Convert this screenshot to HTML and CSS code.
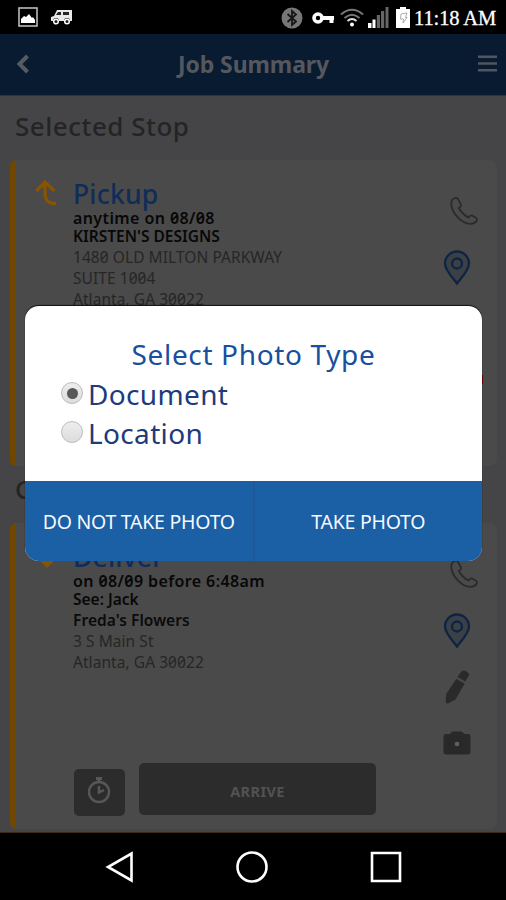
FILE: index.html
```html
<!DOCTYPE html>
<html lang="en">
<head>
<meta charset="utf-8">
<title>Job Summary</title>
<link rel="stylesheet" href="styles.css">
</head>
<body>
<svg class="defs" width="0" height="0">
  <symbol id="phone" viewBox="0 0 28 28"><path d="M5 1C2 2 .8 5 1.500 9C3 17 12 26.500 20 26.800C24 27 26 25 27 23C27.300 21.800 26.500 21 25.500 20.500L22 18.500C20.500 18 19.500 19 18.500 20.500C15 19 10.500 14.500 8.800 11C10.500 10 11.500 9 11 7.500L8 2C7.200.8 6.200.6 5 1Z"/></symbol>
  <symbol id="pin" viewBox="0 0 28 36"><path d="M14 33.500C10.500 28.500 2 20.500 2 13.500A12 12 0 0 1 26 13.500C26 20.500 17.500 28.500 14 33.500Z"/><circle cx="14" cy="13.500" r="5"/></symbol>
</svg>
<div class="screen">
  <div class="status">
    <div class="status-left">
      <svg width="20" height="20" viewBox="0 0 20 20"><rect x="1" y="1" width="18" height="18" fill="none" stroke="#bbb" stroke-width="1.600"/><path d="M3 16V12L6 9L8 10L11 7L14 11L15 10L17 13V16Z" fill="#fff"/></svg>
      <svg width="23" height="16" viewBox="0 0 23 16"><path d="M1 12V8L4 7L7 1H22V12H20A3 3 0 0 0 14 12H9A3 3 0 0 0 3 12Z" fill="#e8e8e8"/><path d="M8 3H11V6H6ZM13 3H19V6H13Z" fill="#222"/><g fill="#222" stroke="#fff" stroke-width="1.500"><circle cx="6" cy="12.500" r="2.300"/><circle cx="17" cy="12.500" r="2.300"/></g></svg>
    </div>
    <div class="status-right">
      <svg class="bt" width="22" height="22" viewBox="0 0 22 22"><circle cx="11" cy="11" r="10.500" fill="#777"/><path d="M6.500 7L15 14.500L11 18V4L15 7.500L6.500 15" fill="none" stroke="#161616" stroke-width="1.800"/></svg>
      <svg class="key" width="23" height="14" viewBox="0 0 23 14"><circle cx="6" cy="7" r="4" fill="none" stroke="#fff" stroke-width="3.600"/><path d="M10 7H22M19.500 7V12" stroke="#fff" stroke-width="4"/></svg>
      <svg class="wifi" width="24" height="19" viewBox="0 0 24 19" fill="none" stroke-width="2"><path d="M1 6.500Q12-3 23 6.500M4.500 10Q12 3.500 19.500 10" stroke="#777"/><path d="M7.500 13Q12 9 16.500 13" stroke="#ddd"/><circle cx="12" cy="16.500" r="2" fill="#fff"/></svg>
      <svg class="signal" width="21" height="21" viewBox="0 0 21 21"><path d="M0 16H3.500V21H0ZM4.500 12.500H7.500V21H4.500Z" fill="#fff"/><path d="M8.800 8H12V21H8.800ZM13 4H16.200V21H13ZM17.500 0H20.500V21H17.500Z" fill="#666"/></svg>
      <svg class="battery" width="14" height="21" viewBox="0 0 14 21"><path d="M4 0H10V2H14V21H0V2H4Z" fill="#fff"/><path d="M5 7L11 6L9.500 10.500H11L7 16L7.500 12L4.500 12Z" fill="none" stroke="#999" stroke-width=".8"/></svg>
      <span class="clock">11:18 AM</span>
    </div>
  </div>
  <header class="header">
    <svg width="14" height="20" viewBox="0 0 14 20"><path d="M11.500 2L3.500 10L11.500 18" fill="none" stroke="#565b62" stroke-width="4"/></svg>
    <h1 class="title">Job Summary</h1>
    <svg class="menu" width="19" height="17" viewBox="0 0 19 17"><path d="M0 1.700H19M0 8.500H19M0 15.300H19" stroke="#51565d" stroke-width="2.400"/></svg>
  </header>
  <main class="content">
    <h2 class="section first">Selected Stop</h2>
    <section class="card">
      <div class="direction"><svg width="22" height="26" viewBox="0 0 22 26"><path d="M1.500 11L10 2L19.500 11M10 3V13Q10 24 21 23.500" fill="none" stroke="#885400" stroke-width="3.300"/></svg></div>
      <div class="info">
        <h3 class="kind">Pickup</h3>
        <p class="strong wide">anytime on 08/08</p>
        <p class="strong gap">KIRSTEN'S DESIGNS</p>
        <p class="addr">1480 OLD MILTON PARKWAY</p>
        <p class="addr">SUITE 1004</p>
        <p class="addr">Atlanta, GA 30022</p>
      </div>
      <div class="actions">
        <svg class="phone"><use href="#phone"/></svg>
        <svg class="pin"><use href="#pin"/></svg>
        <i class="alert"></i>
      </div>
    </section>
    <h2 class="section next">C</h2>
    <section class="card">
      <div class="direction"><svg width="24" height="26" viewBox="0 0 24 26"><path d="M1 14L12 25L23 14Z" fill="#885400"/></svg></div>
      <div class="info">
        <h3 class="kind">Deliver</h3>
        <p class="strong wide">on 08/09 before 6:48am</p>
        <p class="strong gap">See: Jack</p>
        <p class="addr dark">Freda's Flowers</p>
        <p class="addr">3 S Main St</p>
        <p class="addr">Atlanta, GA 30022</p>
        <div class="buttons">
          <div class="timer"><svg width="24" height="28" viewBox="0 0 24 28" fill="none" stroke="#575757"><circle cx="12" cy="16" r="10" stroke-width="2.400"/><path d="M9 2.500H15M12 3V6" stroke-width="3"/><path d="M12 10V16.500L17 14" stroke-width="2.500"/></svg></div>
          <div class="arrive">ARRIVE</div>
        </div>
      </div>
      <div class="actions">
        <svg class="phone"><use href="#phone"/></svg>
        <svg class="pin"><use href="#pin"/></svg>
        <svg class="pencil" viewBox="0 0 24 34"><path d="M12.500 7L15.500 2.500Q17.500-.3 20.500 1L22.500 2.200Q25 4 23 7L20.300 11.500Z"/><path d="M11.300 8.800L19.600 13.700L10.500 29.500L3.500 33.300Q.6 33.800.7 31.500L1.200 24Z"/></svg>
        <svg class="camera" viewBox="0 0 28 24"><path d="M3 3H7Q8 .5 10 .5H18Q20 .5 21 3H25Q27.500 3 27.500 6V20.500Q27.500 23.500 24.500 23.500H3.500Q.5 23.500 .5 20.500V6Q.5 3 3 3Z"/><circle cx="14" cy="13" r="2.300" fill="#606060"/></svg>
      </div>
    </section>
  </main>
  <nav class="nav">
    <svg width="29" height="32" viewBox="0 0 29 32"><path d="M26.500 2.500V29.500L3 16Z"/></svg>
    <svg width="32" height="32" viewBox="0 0 32 32"><circle cx="16" cy="16" r="14.500"/></svg>
    <svg width="32" height="32" viewBox="0 0 32 32"><path d="M2 2H30V30H2Z"/></svg>
  </nav>
  <div class="dialog">
    <div class="dialog-body">
      <h2 class="dialog-title">Select Photo Type</h2>
      <label class="option"><i class="radio on"></i><span>Document</span></label>
      <label class="option"><i class="radio"></i><span>Location</span></label>
    </div>
    <div class="dialog-actions">
      <div class="btn">DO NOT TAKE PHOTO</div>
      <div class="btn">TAKE PHOTO</div>
    </div>
  </div>
</div>
</body>
</html>
```
FILE: styles.css
```css
* { box-sizing: border-box; margin: 0; padding: 0; }
body { width: 506px; height: 900px; overflow: hidden; background: #000; font-family: "Noto Sans", "Open Sans", sans-serif; font-feature-settings: "zero"; }
svg { display: block; flex: none; }
.defs { position: absolute; }
.screen { position: relative; width: 506px; height: 900px; display: flex; flex-direction: column; }
.status { height: 34px; display: flex; justify-content: space-between; padding: 0 9px 0 18px; background: #000; }
.status-left, .status-right { display: flex; align-items: center; }
.status-left { gap: 12px; }
.status-right { padding-top: 1px; }
.key { margin-left: 9px; }
.wifi { margin-left: 5px; }
.signal { margin-left: 4px; }
.battery { margin-left: 7px; }
.clock { width: 87px; padding-left: 4px; color: #fff; font: 400 20.500px/34px "Liberation Serif", serif; letter-spacing: -.1px; white-space: nowrap; -webkit-text-stroke: .3px #fff; }
.header { height: 62px; background: #091b31; border-bottom: 1px solid #24364c; display: flex; align-items: center; justify-content: space-between; padding: 0 9px 1px 16px; }
.title { font-size: 23px; font-weight: 700; color: #54585e; letter-spacing: -.1px; padding-right: 1px; }
.menu { margin-bottom: 2px; }
.content { height: 737px; background: #454547; border-bottom: 1px solid #3a2c18; }
.section { font-size: 26px; font-weight: 500; color: #242424; padding-left: 15px; line-height: 34px; }
.first { height: 64px; padding-top: 13px; letter-spacing: .5px; }
.next { height: 57px; padding-top: 6px; }
.card { height: 306px; margin: 0 9px 0 10px; padding-top: 18px; display: flex; background: #4a4a4a; border-left: 6px solid #704700; border-radius: 6px 8px 8px 6px; }
.direction { width: 58px; padding: 2px 0 0 19px; }
.info { width: 370px; padding-top: 1px; margin-left: -1px; margin-right: 1px; }
.info p { height: 18px; line-height: 18px; font-size: 15.500px; }
.info .kind { height: 30px; line-height: 30px; font-size: 26.500px; font-weight: 500; color: #102c59; letter-spacing: .2px; }
.info .strong { font-weight: 600; color: #080808; }
.info .wide { font-size: 16px; letter-spacing: .4px; }
.info .gap { margin-bottom: 2px; }
.info .addr { height: 21px; line-height: 21px; color: #262626; letter-spacing: .06px; }
.info .dark { font-weight: 600; color: #0b0b0b; }
.actions { position: relative; flex: 1; padding-top: 19px; }
.phone { width: 28px; height: 28px; margin-left: 6px; fill: none; stroke: #2b2b2b; stroke-width: 1.800; }
.pin { width: 28px; height: 36px; margin: 25px 0 0 -1px; fill: #3a4046; stroke: #0f2443; stroke-width: 2.300; }
.alert { position: absolute; left: 37px; top: 197px; width: 2px; height: 9px; background: #600; }
.pencil { width: 24px; height: 34px; margin: 21px 0 0 1px; fill: #2a2a2a; }
.camera { width: 28px; height: 24px; margin: 27px 0 0 -1px; fill: #292929; }
.buttons { display: flex; align-items: flex-end; gap: 14px; margin: 90px 0 0 1px; height: 53px; }
.timer { width: 51px; height: 47px; border-radius: 5px; background: #2c2c2c; display: flex; justify-content: center; padding: 7px 1px 0 0; }
.arrive { width: 237px; height: 52px; margin-bottom: 1px; border-radius: 5px; background: #2c2c2c; color: #525252; font-size: 14.500px; font-weight: 700; line-height: 56px; text-align: center; letter-spacing: .4px; }
.nav { height: 67px; display: flex; align-items: center; justify-content: center; gap: 102px; background: #000; padding-left: 1px; }
.nav svg { fill: none; stroke: #fff; stroke-width: 2.600; }
.dialog { position: absolute; left: 25px; top: 306px; width: 457px; height: 255px; border-radius: 14px; overflow: hidden; background: #fff; box-shadow: 0 -1px 1px #111; }
.dialog-body { height: 175px; padding-top: 30px; }
.dialog-title { text-align: center; font-size: 28px; line-height: 37px; font-weight: 400; letter-spacing: .65px; color: #194f9d; }
.option { height: 39px; display: flex; align-items: center; padding: 3px 0 0 36px; gap: 5px; font-size: 28px; line-height: 39px; letter-spacing: .35px; color: #203a7c; }
.radio { width: 22px; height: 22px; border-radius: 50%; border: 1px solid #bcbcbc; background: linear-gradient(#eee, #dcdcdc); margin-top: -2px; display: flex; align-items: center; justify-content: center; }
.on::after { content: ""; width: 11px; height: 11px; border-radius: 50%; background: #585858; }
.dialog-actions { display: flex; height: 80px; background: #1b5fa4; }
.btn { flex: 1; text-align: center; color: #f6f8ff; font-size: 19.500px; line-height: 82px; letter-spacing: -.25px; }
.btn:first-child { border-right: 2px solid #20589a; }
```
